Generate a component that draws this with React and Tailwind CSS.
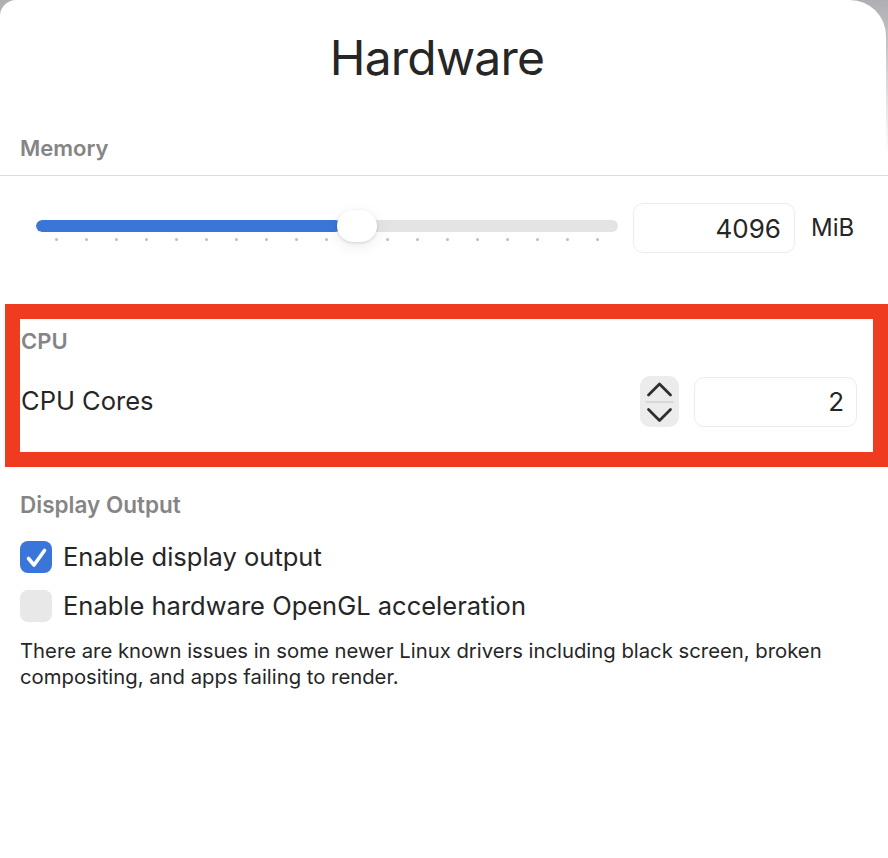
import React from "react";

function Chevrons() {
  return (
    <svg width="39" height="51" viewBox="0 0 39 51" fill="none">
      <polyline points="8.5,19 19.5,8 30.5,19" stroke="#2f2f2f" strokeWidth="2.8" strokeLinecap="round" strokeLinejoin="round" />
      <line x1="5.5" y1="26" x2="33.5" y2="26" stroke="#d2d2d2" strokeWidth="1.5" />
      <polyline points="8.5,33.5 19.5,44.5 30.5,33.5" stroke="#2f2f2f" strokeWidth="2.8" strokeLinecap="round" strokeLinejoin="round" />
    </svg>
  );
}

function Check() {
  return (
    <svg width="32" height="32" viewBox="0 0 32 32" fill="none">
      <polyline points="8.5,17.5 14,24 24.5,9.5" stroke="#fff" strokeWidth="3.6" strokeLinecap="round" strokeLinejoin="round" />
    </svg>
  );
}

export default function App() {
  const dots = Array.from({ length: 19 });
  return (
    <div className="w-[888px] h-[858px] overflow-hidden bg-linear-to-b from-[#aeaeb3] to-white to-[18%] font-['Inter',sans-serif] text-[#262626]">
      <div className="w-[886px] h-full bg-white rounded-tl-[16px] rounded-tr-[36px] flex flex-col">
        <div className="pt-[29px] pr-[12px] text-center text-[48px] leading-[58px] tracking-[-0.8px]">Hardware</div>

        <div className="mt-[48px] px-[20px] text-[22px] leading-[26px] font-semibold text-[#858585]">Memory</div>
        <div className="mt-[14px] h-px bg-[#dcdcdc] w-[888px]" />

        <div className="mt-[27px] flex items-start pl-[36px]">
          <div className="relative w-[582px] mt-[17px]">
            <div className="h-[12px] rounded-full bg-[#e4e4e4] overflow-hidden">
              <div className="h-full w-[305px] bg-[#3a76d8] rounded-full" />
            </div>
            <div className="mt-[6px] flex justify-between px-[18.5px]">
              {dots.map((_, i) => (
                <div key={i} className="w-[3px] h-[3px] rounded-full bg-[#bdbdbd]" />
              ))}
            </div>
            <div className="absolute left-[301px] top-[-10px] w-[40px] h-[32px] rounded-[16px] bg-white shadow-[0_1px_3px_rgba(0,0,0,0.14),0_4px_16px_rgba(0,0,0,0.08)]" />
          </div>
          <div className="ml-[15px] w-[162px] h-[50px] rounded-[10px] border-[1.5px] border-[#ebebeb] flex items-center justify-end pr-[13px] text-[26px]">4096</div>
          <div className="ml-[16px] self-center text-[24px]">MiB</div>
        </div>

        <div className="mt-[51px] ml-[5px] w-[883px] border-[15px] border-[#ef3b1f]">
          <div className="pt-[9px] pl-[1px] text-[22px] leading-[26px] font-semibold text-[#858585]">CPU</div>
          <div className="mt-[22px] pb-[25px] pl-[1px] pr-[16px] flex items-center">
            <div className="flex-1 text-[25.5px]">CPU Cores</div>
            <div className="w-[39px] h-[51px] rounded-[10px] bg-[#ececec]">
              <Chevrons />
            </div>
            <div className="ml-[15px] w-[163px] h-[50px] rounded-[10px] border-[1.5px] border-[#ebebeb] flex items-center justify-end pr-[12px] text-[26px]">2</div>
          </div>
        </div>

        <div className="px-[20px]">
          <div className="mt-[25px] text-[22.5px] leading-[26px] font-semibold text-[#858585]">Display Output</div>
          <div className="mt-[23px] flex items-center h-[32px]">
            <div className="w-[32px] h-[32px] rounded-[8px] bg-[#3a76d9]">
              <Check />
            </div>
            <div className="ml-[11px] text-[25.5px]">Enable display output</div>
          </div>
          <div className="mt-[17px] flex items-center h-[32px]">
            <div className="w-[32px] h-[32px] rounded-[8px] bg-[#e8e8e8]" />
            <div className="ml-[11px] text-[25.5px]">Enable hardware OpenGL acceleration</div>
          </div>
          <div className="mt-[16px] text-[20.3px] leading-[26px] w-[840px]">
            There are known issues in some newer Linux drivers including black screen, broken compositing, and apps failing to render.
          </div>
        </div>
      </div>
    </div>
  );
}
